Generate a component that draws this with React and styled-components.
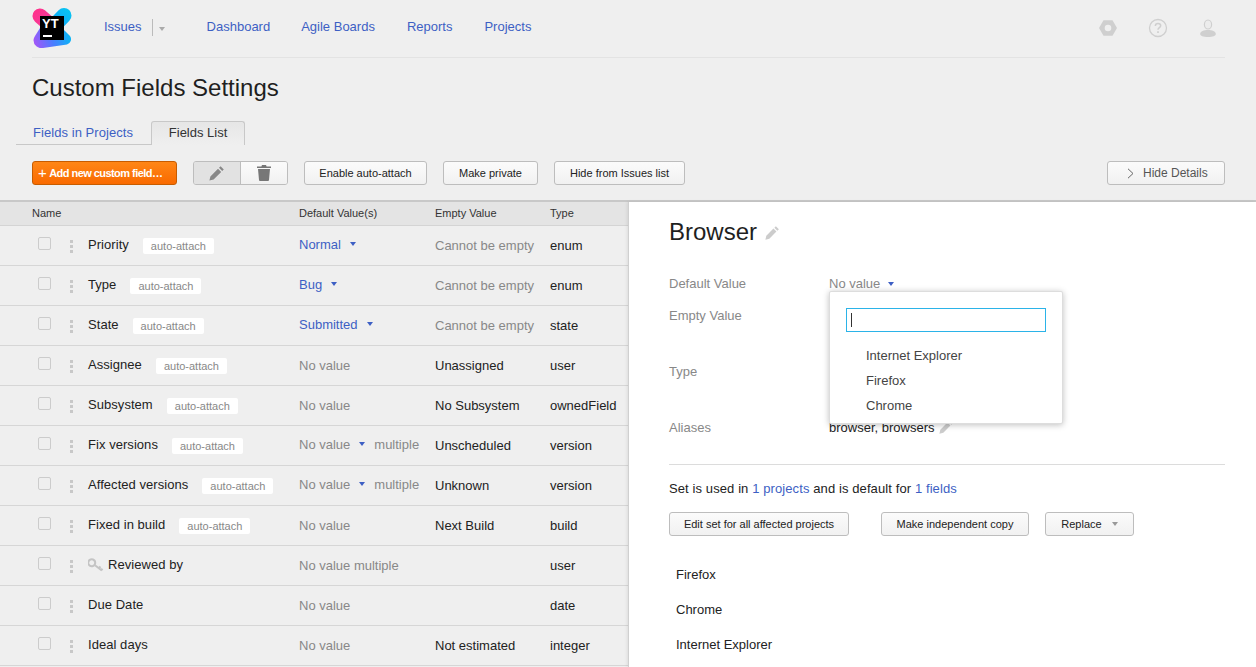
import React from 'react';
import styled, { createGlobalStyle } from 'styled-components';

const Global = createGlobalStyle`
  html, body { margin: 0; padding: 0; height: 100%; overflow: hidden; background: #efefef; }
  body { font-family: "Liberation Sans", Arial, sans-serif; font-size: 13px; color: #222; }
`;

const Page = styled.div`
  width: 1256px;
  height: 667px;
  overflow: hidden;
  display: flex;
  flex-direction: column;
`;

const Head = styled.div`
  padding: 0 31px 0 32px;
`;

const TopBar = styled.div`
  height: 57px;
  border-bottom: 1px solid #e3e3e3;
  display: flex;
  align-items: flex-start;
`;

const Logo = styled.div`
  position: relative;
  width: 40px;
  height: 40px;
  margin-top: 8px;
  flex: none;
`;

const LogoSquare = styled.div`
  position: absolute;
  left: 8px;
  top: 8px;
  width: 24px;
  height: 24px;
  background: #000;
  color: #fff;
  font-weight: bold;
  font-size: 13px;
  line-height: 15px;
  padding-left: 2px;
  box-sizing: border-box;
  &:after {
    content: '';
    position: absolute;
    left: 3px;
    bottom: 3px;
    width: 9px;
    height: 2px;
    background: #fff;
  }
`;

const NavLink = styled.a`
  color: #3d5fc4;
  font-size: 13px;
  line-height: 16px;
  margin-top: 19px;
  margin-left: ${p => p.$ml || 32}px;
`;

const IssuesCaret = styled.div`
  margin: 19px 0 0 10px;
  height: 17px;
  width: 13px;
  border-left: 1px solid #bbb;
  position: relative;
  &:after {
    content: '';
    position: absolute;
    left: 6px;
    top: 8px;
    border: 3px solid transparent;
    border-top: 4px solid #aaa;
    border-bottom: 0;
  }
`;

const TopIcons = styled.div`
  margin-left: auto;
  display: flex;
  gap: 30px;
  margin-top: 18px;
  margin-right: 7px;
`;

const Title = styled.h1`
  margin: 0;
  font-weight: normal;
  font-size: 24px;
  line-height: 28px;
  padding-top: 16px;
  color: #1f1f1f;
`;

const Tabs = styled.div`
  margin: 19px 0 0 -16px;
  display: flex;
  align-items: flex-end;
  height: 24px;
`;

const PlainTab = styled.a`
  color: #3d5fc4;
  font-size: 13px;
  letter-spacing: 0.06px;
  height: 23px;
  line-height: 24px;
  padding: 0 18px 0 17px;
  border-bottom: 1px solid #c8c8c8;
`;

const ActiveTab = styled.div`
  width: 92px;
  height: 23px;
  line-height: 21px;
  text-align: center;
  font-size: 13px;
  color: #333;
  border: 1px solid #c8c8c8;
  border-bottom: 0;
  border-radius: 3px 3px 0 0;
  background: linear-gradient(#e6e6e6, #efefef);
`;

const Toolbar = styled.div`
  margin-top: 16px;
  height: 24px;
  display: flex;
`;

const AddButton = styled.div`
  width: 145px;
  height: 24px;
  box-sizing: border-box;
  border: 1px solid #c75c00;
  border-radius: 3px;
  background: linear-gradient(#ff8616, #f96a00);
  color: #fff;
  font-weight: bold;
  font-size: 11px;
  letter-spacing: -0.55px;
  line-height: 22px;
  padding-left: 5px;
  white-space: nowrap;
  span { font-size: 15px; font-weight: normal; margin-right: 3px; vertical-align: -1px; }
`;

const IconGroup = styled.div`
  display: flex;
  margin-left: 16px;
  height: 24px;
  box-sizing: border-box;
  border: 1px solid #bdbdbd;
  border-radius: 3px;
  overflow: hidden;
`;

const IconCell = styled.div`
  width: 46px;
  display: flex;
  align-items: center;
  justify-content: center;
  background: ${p => (p.$on ? '#e2e2e2' : 'linear-gradient(#fbfbfb, #f1f1f1)')};
  & + & { border-left: 1px solid #bdbdbd; }
`;

const Button = styled.div`
  height: 24px;
  width: ${p => p.$w}px;
  box-sizing: border-box;
  margin-left: ${p => p.$ml ?? 16}px;
  border: 1px solid #bdbdbd;
  border-radius: 3px;
  background: linear-gradient(#fbfbfb, #f1f1f1);
  color: #222;
  font-size: 11px;
  line-height: 22px;
  white-space: nowrap;
  display: flex;
  align-items: center;
  justify-content: center;
`;

const HideButton = styled(Button)`
  margin-left: auto;
  justify-content: flex-start;
  padding-left: 19px;
  color: #555;
  font-size: 12px;
  gap: 9px;
`;

const Main = styled.div`
  margin-top: 15px;
  flex: 1;
  min-height: 0;
  display: flex;
  border-top: 2px solid #c8c8c8;
`;

const ListPane = styled.div`
  width: 628px;
  flex: none;
`;

const cols = '299px 136px 115px 1fr';

const ListHead = styled.div`
  display: grid;
  grid-template-columns: ${cols};
  height: 24px;
  box-sizing: border-box;
  background: #e4e4e4;
  border-bottom: 1px solid #d4d4d4;
  font-size: 11px;
  line-height: 22px;
  color: #333;
  div:first-child { padding-left: 32px; }
`;

const Row = styled.div`
  display: grid;
  grid-template-columns: ${cols};
  height: 40px;
  box-sizing: border-box;
  border-bottom: 1px solid #d6d6d6;
  align-items: center;
`;

const NameCell = styled.div`
  display: flex;
  align-items: center;
  padding-left: 38px;
  position: relative;
  top: -1px;
`;

const Check = styled.div`
  width: 11px;
  height: 11px;
  border: 1px solid #ccc;
  border-radius: 2px;
  flex: none;
  margin-top: -3px;
`;

const Dots = styled.div`
  width: 3px;
  height: 14px;
  margin: 3px 15px 0 19px;
  flex: none;
  background: radial-gradient(circle, #c8c8c8 1.5px, transparent 1.7px) 0 0 / 3px 5px;
`;

const FieldName = styled.span`
  font-size: 13px;
  letter-spacing: 0.05px;
  color: #222;
`;

const Badge = styled.span`
  background: #fff;
  color: #888;
  font-size: 11px;
  line-height: 16px;
  padding: 0 8px;
  margin-left: 14px;
  border-radius: 2px;
  position: relative;
  top: 1px;
`;

const ValueCell = styled.div`
  font-size: 13px;
  color: ${p => p.$color || '#222'};
  display: flex;
  align-items: center;
  white-space: nowrap;
  position: relative;
  top: ${p => (p.$up ? -1 : 0)}px;
`;

const Caret = styled.i`
  display: inline-block;
  margin-left: ${p => p.$ml ?? 9}px;
  margin-top: -2px;
  border: 3px solid transparent;
  border-top: 4px solid ${p => p.$color || '#3d5fc4'};
  border-bottom: 0;
`;

const Multi = styled.span`
  margin-left: 9px;
  color: #888;
`;

const DetailPane = styled.div`
  flex: 1;
  position: relative;
  background: #fff;
  border-left: 1px solid #d0d0d0;
  padding: 0 31px 0 40px;
  box-shadow: -1px 0 3px rgba(0, 0, 0, 0.08);
`;

const DetailTitle = styled.div`
  display: flex;
  align-items: center;
  font-size: 24px;
  line-height: 28px;
  color: #1f1f1f;
  padding-top: 16px;
  gap: 8px;
`;

const Form = styled.div`
  margin-top: 29px;
  display: grid;
  grid-template-columns: 160px 1fr;
  grid-template-rows: 32px 56px 56px 18px;
  color: #888;
  font-size: 13px;
  line-height: 18px;
`;

const FormValue = styled.div`
  display: flex;
  align-items: flex-start;
  color: ${p => p.$color || '#888'};
  gap: ${p => p.$gap || 0}px;
`;

const Divider = styled.div`
  margin-top: 27px;
  border-top: 1px solid #dcdcdc;
`;

const UsedIn = styled.div`
  margin-top: 16px;
  font-size: 13px;
  letter-spacing: 0.1px;
  line-height: 16px;
  color: #222;
  a { color: #3d5fc4; }
`;

const ActionRow = styled.div`
  margin-top: 15px;
  display: flex;
`;

const Values = styled.div`
  margin-top: 31px;
  padding-left: 7px;
  display: flex;
  flex-direction: column;
  gap: 19px;
  font-size: 13px;
  line-height: 16px;
  color: #222;
`;

const Popup = styled.div`
  position: absolute;
  left: 200px;
  top: 89px;
  width: 234px;
  height: 133px;
  box-sizing: border-box;
  background: #fff;
  border: 1px solid #ddd;
  border-radius: 2px;
  box-shadow: 0 1px 6px rgba(0, 0, 0, 0.25);
  padding: 16px;
`;

const SearchBox = styled.div`
  width: 200px;
  height: 24px;
  margin-bottom: 11px;
  box-sizing: border-box;
  border: 1px solid #2bb3e8;
  display: flex;
  align-items: center;
  padding-left: 4px;
  &:before { content: ''; width: 1px; height: 14px; background: #333; }
`;

const PopupItem = styled.div`
  padding-left: 20px;
  font-size: 13px;
  line-height: 25px;
  color: #444;
`;

const Pencil = ({ size = 16, color = '#888' }) => (
  <svg width={size} height={size} viewBox="0 0 16 16">
    <path fill={color} d="M11.600 1.200l3.200 3.200-1.600 1.600L10 2.800zM9 3.800L12.200 7l-7.600 7.600-4.200 1 1-4.200z" />
  </svg>
);

const Trash = () => (
  <svg width="14" height="16" viewBox="0 0 14 16">
    <path fill="#777" d="M5 0h4l.6 1.400H14V3H0V1.400h4.400zM1 4h12l-1 11a1 1 0 0 1-1 1H3a1 1 0 0 1-1-1z" />
  </svg>
);

const Hex = () => (
  <svg width="20" height="20" viewBox="0 0 20 20">
    <path fill="#cfcfcf" fillRule="evenodd" d="M5.500 2.200h9L19 10l-4.500 7.800h-9L1 10zM10 6.700a3.300 3.300 0 1 0 0 6.600 3.300 3.300 0 0 0 0-6.600z" />
  </svg>
);

const Help = () => (
  <svg width="20" height="20" viewBox="0 0 20 20" fill="none" stroke="#cfcfcf">
    <circle cx="10" cy="10" r="8.500" strokeWidth="1.300" />
    <path strokeWidth="1.500" d="M7.300 8c0-1.700 1.200-2.600 2.700-2.600s2.700.9 2.700 2.300c0 1.800-2.700 2-2.700 4" />
    <path strokeWidth="1.700" d="M10 13.300v1.700" />
  </svg>
);

const User = () => (
  <svg width="20" height="20" viewBox="0 0 20 20">
    <ellipse cx="10" cy="6.500" rx="3.600" ry="4.500" fill="#ececec" stroke="#cfcfcf" strokeWidth="1.200" />
    <path fill="#cfcfcf" d="M2.200 16c0-2.600 3.800-4 7.800-4s7.800 1.400 7.800 4c0 1.800-3 3-7.800 3s-7.800-1.200-7.800-3z" />
  </svg>
);

const Key = () => (
  <svg width="16" height="14" viewBox="0 0 16 14" style={{ marginRight: 4, marginTop: 1 }}>
    <path fill="none" stroke="#c4c4c4" strokeWidth="2" d="M5 1.500a3.500 3.500 0 1 0 0 6.500 3.500 3.500 0 0 0 0-6.500zM7.300 7.500l6.500 5M11 10l1.500-1.500M13.300 12l1.200-1.300" />
  </svg>
);

const LogoMark = () => (
  <svg width="40" height="40" viewBox="0 0 40 40" style={{ display: 'block' }}>
    <defs>
      <linearGradient id="yt-a" gradientUnits="userSpaceOnUse" x1="2" y1="4" x2="22" y2="22">
        <stop offset="0" stopColor="#ff318c" />
        <stop offset="1" stopColor="#f040a0" />
      </linearGradient>
      <linearGradient id="yt-b" gradientUnits="userSpaceOnUse" x1="38" y1="4" x2="14" y2="30">
        <stop offset="0" stopColor="#07c3f2" />
        <stop offset="1" stopColor="#1f8cff" />
      </linearGradient>
      <linearGradient id="yt-c" gradientUnits="userSpaceOnUse" x1="2" y1="38" x2="38" y2="26">
        <stop offset="0" stopColor="#a855f7" />
        <stop offset="0.5" stopColor="#4a7cff" />
        <stop offset="1" stopColor="#07b8f5" />
      </linearGradient>
    </defs>
    <path fill="none" stroke="url(#yt-a)" strokeWidth="15" strokeLinecap="round" d="M8 8L24 22" />
    <path fill="none" stroke="url(#yt-b)" strokeWidth="15" strokeLinecap="round" d="M32 7.500L16 24" />
    <path fill="url(#yt-c)" d="M8 20L30 20L38 28A5.500 5.500 0 0 1 35 36.500L11 40A8 8 0 0 1 1.500 32A8 8 0 0 1 3 28z" />
  </svg>
);

const fields = [
  { name: 'Priority', value: 'Normal', link: true, empty: 'Cannot be empty', type: 'enum', attach: true },
  { name: 'Type', value: 'Bug', link: true, empty: 'Cannot be empty', type: 'enum', attach: true },
  { name: 'State', value: 'Submitted', link: true, empty: 'Cannot be empty', type: 'state', attach: true },
  { name: 'Assignee', value: 'No value', empty: 'Unassigned', type: 'user', attach: true, dark: true },
  { name: 'Subsystem', value: 'No value', empty: 'No Subsystem', type: 'ownedField', attach: true, dark: true },
  { name: 'Fix versions', value: 'No value', multi: true, empty: 'Unscheduled', type: 'version', attach: true, dark: true },
  { name: 'Affected versions', value: 'No value', multi: true, empty: 'Unknown', type: 'version', attach: true, dark: true },
  { name: 'Fixed in build', value: 'No value', empty: 'Next Build', type: 'build', attach: true, dark: true },
  { name: 'Reviewed by', value: 'No value multiple', empty: '', type: 'user', key: true },
  { name: 'Due Date', value: 'No value', empty: '', type: 'date' },
  { name: 'Ideal days', value: 'No value', empty: 'Not estimated', type: 'integer', dark: true },
];

export default function App() {
  return (
    <Page>
      <Global />
      <Head>
        <TopBar>
          <Logo>
            <LogoMark />
            <LogoSquare>YT</LogoSquare>
          </Logo>
          <NavLink $ml={32}>Issues</NavLink>
          <IssuesCaret />
          <NavLink $ml={41}>Dashboard</NavLink>
          <NavLink $ml={31}>Agile Boards</NavLink>
          <NavLink $ml={32}>Reports</NavLink>
          <NavLink>Projects</NavLink>
          <TopIcons>
            <Hex />
            <Help />
            <User />
          </TopIcons>
        </TopBar>
        <Title>Custom Fields Settings</Title>
        <Tabs>
          <PlainTab>Fields in Projects</PlainTab>
          <ActiveTab>Fields List</ActiveTab>
        </Tabs>
        <Toolbar>
          <AddButton><span>+</span>Add new custom field…</AddButton>
          <IconGroup>
            <IconCell $on><Pencil /></IconCell>
            <IconCell><Trash /></IconCell>
          </IconGroup>
          <Button $w={123}>Enable auto-attach</Button>
          <Button $w={95}>Make private</Button>
          <Button $w={131}>Hide from Issues list</Button>
          <HideButton $w={118}>
            <svg width="7" height="11" viewBox="0 0 7 11" fill="none" stroke="#666"><path d="M1 .8l5 4.700-5 4.700" /></svg>
            Hide Details
          </HideButton>
        </Toolbar>
      </Head>
      <Main>
        <ListPane>
          <ListHead>
            <div>Name</div>
            <div>Default Value(s)</div>
            <div>Empty Value</div>
            <div>Type</div>
          </ListHead>
          {fields.map(f => (
            <Row key={f.name}>
              <NameCell>
                <Check />
                <Dots />
                {f.key && <Key />}
                <FieldName>{f.name}</FieldName>
                {f.attach && <Badge>auto-attach</Badge>}
              </NameCell>
              <ValueCell $up={f.link || f.multi} $color={f.link ? '#3d5fc4' : '#888'}>
                {f.value}
                {f.link && <Caret />}
                {f.multi && <Caret />}
                {f.multi && <Multi>multiple</Multi>}
              </ValueCell>
              <ValueCell $color={f.dark ? '#222' : '#888'}>{f.empty}</ValueCell>
              <ValueCell>{f.type}</ValueCell>
            </Row>
          ))}
        </ListPane>
        <DetailPane>
          <DetailTitle>Browser <Pencil size={15} color="#ccc" /></DetailTitle>
          <Form>
            <div>Default Value</div>
            <FormValue>No value <Caret $ml={8} style={{ marginTop: 7 }} /></FormValue>
            <div>Empty Value</div>
            <FormValue />
            <div>Type</div>
            <FormValue />
            <div>Aliases</div>
            <FormValue $color="#222" $gap={5}>browser, browsers <Pencil size={15} color="#ccc" /></FormValue>
          </Form>
          <Divider />
          <UsedIn>Set is used in <a>1 projects</a> and is default for <a>1 fields</a></UsedIn>
          <ActionRow>
            <Button $ml={0} $w={180}>Edit set for all affected projects</Button>
            <Button $ml={32} $w={148}>Make independent copy</Button>
            <Button $w={89}>Replace <Caret $ml={10} $color="#999" style={{ marginTop: 0 }} /></Button>
          </ActionRow>
          <Values>
            <div>Firefox</div>
            <div>Chrome</div>
            <div>Internet Explorer</div>
          </Values>
          <Popup>
            <SearchBox />
            <PopupItem>Internet Explorer</PopupItem>
            <PopupItem>Firefox</PopupItem>
            <PopupItem>Chrome</PopupItem>
          </Popup>
        </DetailPane>
      </Main>
    </Page>
  );
}
